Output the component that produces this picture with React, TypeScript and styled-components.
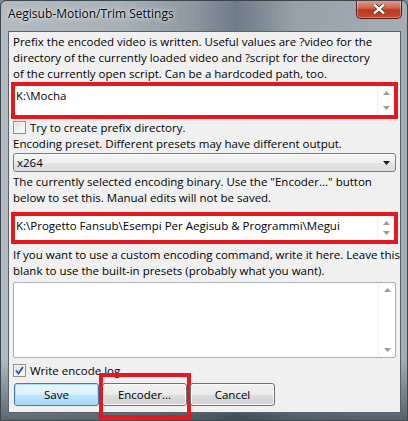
import React from 'react';
import styled, { createGlobalStyle } from 'styled-components';

const GlobalStyle = createGlobalStyle`
  html, body {
    margin: 0;
    padding: 0;
    background: #7d8a94;
  }
  * { box-sizing: border-box; }
`;

const Window = styled.div`
  width: 408px;
  height: 421px;
  display: flex;
  flex-direction: column;
  border: 1px solid #3d464d;
  border-radius: 6px 6px 0 0;
  overflow: hidden;
  background:
    linear-gradient(180deg, rgba(255,255,255,0) 0%, rgba(255,255,255,0) 85%, rgba(20,40,45,0.55) 100%),
    linear-gradient(90deg, #b3bbc1 0%, #a7b0b7 30%, #8b969f 48%, #6f7b85 58%, #95a0a8 72%, #a5aeb5 100%);
  font-family: "Open Sans", "Noto Sans", sans-serif;
  font-size: 11.5px;
  color: #000;
`;

const TitleBar = styled.div`
  height: 30px;
  display: flex;
  justify-content: space-between;
  align-items: flex-start;
  padding-left: 7px;
`;

const Title = styled.span`
  margin-top: 5px;
  font-size: 12px;
  line-height: 16px;
  text-shadow: 0 0 6px rgba(255,255,255,0.9), 0 0 2px rgba(255,255,255,0.9);
`;

const CloseButton = styled.div`
  width: 46px;
  height: 19px;
  margin-top: -1px;
  margin-right: 5px;
  display: flex;
  align-items: center;
  justify-content: center;
  border: 1px solid #5b1f15;
  border-top: none;
  border-radius: 0 0 5px 5px;
  background: linear-gradient(180deg, #e6a394 0%, #d0644e 45%, #b83a22 55%, #c5472b 100%);
  box-shadow: inset 0 0 0 1px rgba(255,255,255,0.35);
`;

const Client = styled.div`
  position: relative;
  flex: 1;
  margin: 0 6px 7px 7px;
  background: #f0f0f0;
  border: 1px solid #58636c;
  padding: 2px 4px 0 4px;
  display: flex;
  flex-direction: column;
`;

const Text = styled.div<{ $top?: number }>`
  line-height: 16px;
  white-space: nowrap;
  margin-top: ${p => p.$top ?? 0}px;
`;

const Highlight = styled.div<{ $top?: number }>`
  margin: ${p => p.$top ?? 0}px -2px 0 -2px;
  border: 4px solid #e5171f;
`;

const TextBox = styled.div<{ $height: number; $framed?: boolean }>`
  height: ${p => p.$height}px;
  background: #fff;
  border: ${p => (p.$framed ? '1px solid #abadb3' : 'none')};
  border-radius: ${p => (p.$framed ? '2px' : '0')};
  display: flex;
  margin-top: ${p => (p.$framed ? '3px' : '0')};
`;

const TextValue = styled.div`
  flex: 1;
  padding: 2px 0 0 1px;
  line-height: 16px;
  white-space: nowrap;
`;

const ScrollColumn = styled.div`
  width: 17px;
  border-left: 1px solid #f0f0f0;
  display: flex;
  flex-direction: column;
  justify-content: space-between;
  align-items: center;
  padding: 5px 0 5px 0;
`;

const Arrow = ({ down, color = '#9a9a9a' }: { down?: boolean; color?: string }) => (
  <svg width="7" height="4" viewBox="0 0 7 4">
    <polygon points={down ? '0,0 7,0 3.5,4' : '3.5,0 7,4 0,4'} fill={color} />
  </svg>
);

const CheckRow = styled.div<{ $top?: number }>`
  display: flex;
  align-items: center;
  gap: 4px;
  height: 16px;
  margin-top: ${p => p.$top ?? 0}px;
`;

const CheckBox = styled.div`
  width: 13px;
  height: 13px;
  border: 1px solid #8f8f8f;
  background: linear-gradient(135deg, #dcdcdc 0%, #f4f4f4 60%, #ffffff 100%);
  box-shadow: inset 0 0 0 1px #f4f4f4;
  display: flex;
  align-items: center;
  justify-content: center;
`;

const Combo = styled.div`
  height: 19px;
  margin-top: 1px;
  border: 1px solid #7e7e7e;
  border-radius: 3px;
  background: linear-gradient(180deg, #f6f6f6 0%, #eeeeee 50%, #e4e4e4 51%, #dcdcdc 100%);
  display: flex;
  align-items: center;
  justify-content: space-between;
  padding: 0 5px 0 3px;
`;

const ButtonRow = styled.div`
  display: flex;
  gap: 3px;
  margin-top: 5px;
  margin-left: 1px;
`;

const Button = styled.div<{ $default?: boolean }>`
  position: relative;
  width: 85px;
  height: 23px;
  display: flex;
  align-items: center;
  justify-content: center;
  border: 1px solid ${p => (p.$default ? '#3c7fb1' : '#707070')};
  border-radius: 3px;
  background: ${p =>
    p.$default
      ? 'linear-gradient(180deg, #eaf6fd 0%, #d9f0fc 50%, #bee6fd 51%, #a7d9f5 100%)'
      : 'linear-gradient(180deg, #f2f2f2 0%, #ebebeb 50%, #dddddd 51%, #cfcfcf 100%)'};
  box-shadow: inset 0 0 0 1px ${p => (p.$default ? '#a9dcf6' : '#fcfcfc')};
`;

const Marked = styled.div`
  position: relative;
  &::after {
    content: '';
    position: absolute;
    left: -3px;
    right: -4px;
    top: -10px;
    bottom: -13px;
    border: 4px solid #e5171f;
    pointer-events: none;
  }
`;

const Scrolled = ({ value, height, framed }: { value: string; height: number; framed?: boolean }) => (
  <TextBox $height={height} $framed={framed}>
    <TextValue>{value}</TextValue>
    <ScrollColumn>
      <Arrow />
      <Arrow down />
    </ScrollColumn>
  </TextBox>
);

export default function App() {
  return (
    <>
      <GlobalStyle />
      <Window>
        <TitleBar>
          <Title>Aegisub-Motion/Trim Settings</Title>
          <CloseButton>
            <svg width="12" height="10" viewBox="0 0 12 10">
              <path d="M1 0.5 L11 9.5 M11 0.5 L1 9.5" stroke="#3a1a12" strokeWidth="3.6" />
              <path d="M1 0.5 L11 9.5 M11 0.5 L1 9.5" stroke="#ffffff" strokeWidth="2.4" />
            </svg>
          </CloseButton>
        </TitleBar>
        <Client>
          <Text>
            Prefix the encoded video is written. Useful values are ?video for the<br />
            directory of the currently loaded video and ?script for the directory<br />
            of the currently open script. Can be a hardcoded path, too.
          </Text>
          <Highlight>
            <Scrolled value="K:\Mocha" height={29} />
          </Highlight>
          <CheckRow $top={0}>
            <CheckBox />
            <span>Try to create prefix directory.</span>
          </CheckRow>
          <Text $top={1}>Encoding preset. Different presets may have different output.</Text>
          <Combo>
            <span>x264</span>
            <Arrow down color="#1a1a1a" />
          </Combo>
          <Text $top={2}>
            The currently selected encoding binary. Use the "Encoder..." button<br />
            below to set this. Manual edits will not be saved.
          </Text>
          <Highlight $top={6}>
            <Scrolled value="K:\Progetto Fansub\Esempi Per Aegisub & Programmi\Megui" height={24} />
          </Highlight>
          <Text $top={3}>
            If you want to use a custom encoding command, write it here. Leave this<br />
            blank to use the built-in presets (probably what you want).
          </Text>
          <Scrolled value="" height={76} framed />
          <CheckRow $top={4}>
            <CheckBox>
              <svg width="9" height="9" viewBox="0 0 9 9">
                <path d="M1 4.5 L3.5 7.5 L8 1" stroke="#2a4bb0" strokeWidth="1.8" fill="none" />
              </svg>
            </CheckBox>
            <span>Write encode log.</span>
          </CheckRow>
          <ButtonRow>
            <Button $default>Save</Button>
            <Marked>
              <Button>Encoder...</Button>
            </Marked>
            <Button>Cancel</Button>
          </ButtonRow>
        </Client>
      </Window>
    </>
  );
}
